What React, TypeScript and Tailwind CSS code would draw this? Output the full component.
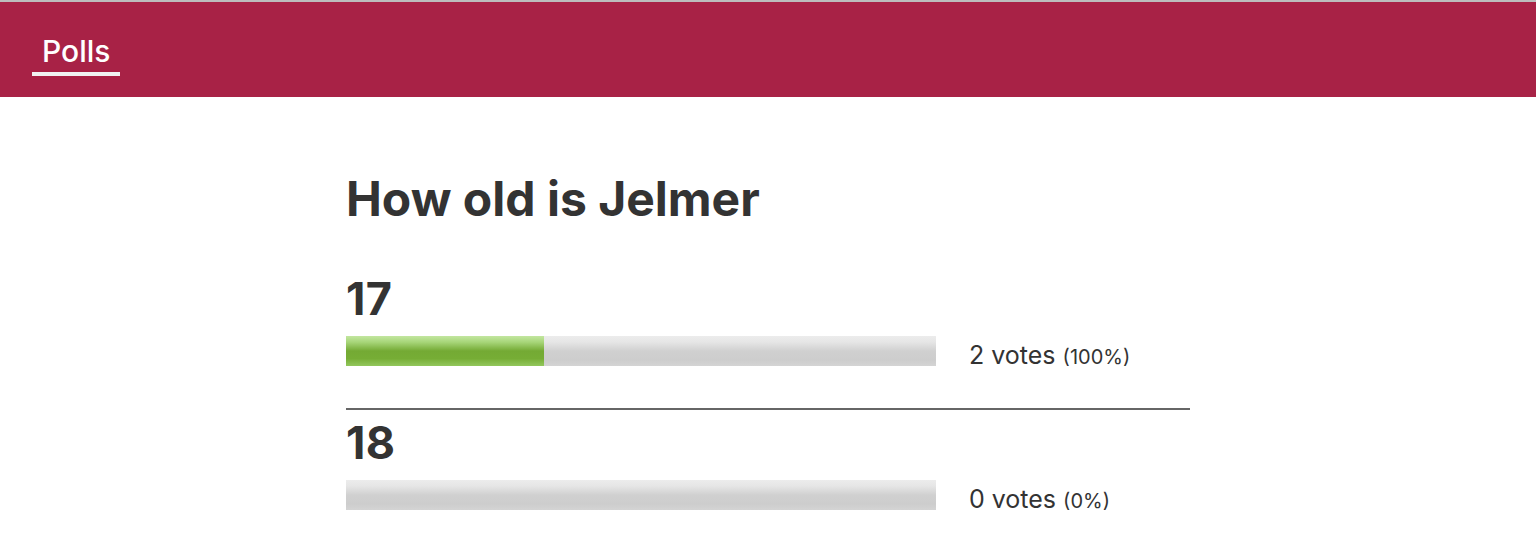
import React from "react";

type Option = { label: string; votes: number; percent: number; fill: number };

const options: Option[] = [
	{ label: "17", votes: 2, percent: 100, fill: 33.6 },
	{ label: "18", votes: 0, percent: 0, fill: 0 },
];

export default function App() {
	return (
		<main className="min-h-screen bg-white font-['Inter',sans-serif] text-[#333]">
			<header className="h-[97px] bg-[#a82246] border-t-2 border-[#bdbdbd] pt-[31px] pl-[32px]">
				<a className="inline-block px-[10px] pb-[3px] border-b-4 border-[#f2f2f2] text-white text-[30px] leading-[36px] font-medium">
					Polls
				</a>
			</header>
			<div className="max-w-[844px] mx-auto pt-[73px]">
				<h1 className="text-[48px] leading-[58px] font-bold">How old is Jelmer</h1>
				<ul className="mt-[46px]">
					{options.map((o, i) => (
						<li
							key={o.label}
							className={i < options.length - 1 ? "border-b-2 border-[#666] pb-[32px]" : "pt-[8px]"}
						>
							<h2 className="text-[45px] leading-[50px] font-bold tracking-[0.3px]">{o.label}</h2>
							<div className="flex items-start gap-[33px] mt-[12px]">
								<div className="w-[590px] h-[30px] bg-[linear-gradient(to_bottom,#ececec_0%,#e6e6e6_20%,#d0d0d0_50%,#cdcdcd_80%,#d4d4d4_100%)]">
									<div
										className="h-full bg-[linear-gradient(to_bottom,#c3e6a0_0%,#a8d67a_20%,#74aa34_50%,#76ad35_75%,#92c75c_100%)]"
										style={{ width: `${o.fill}%` }}
									/>
								</div>
								<span className="text-[25px] leading-[38px]">
									{o.votes} votes <span className="text-[20px]">({o.percent}%)</span>
								</span>
							</div>
						</li>
					))}
				</ul>
			</div>
		</main>
	);
}
